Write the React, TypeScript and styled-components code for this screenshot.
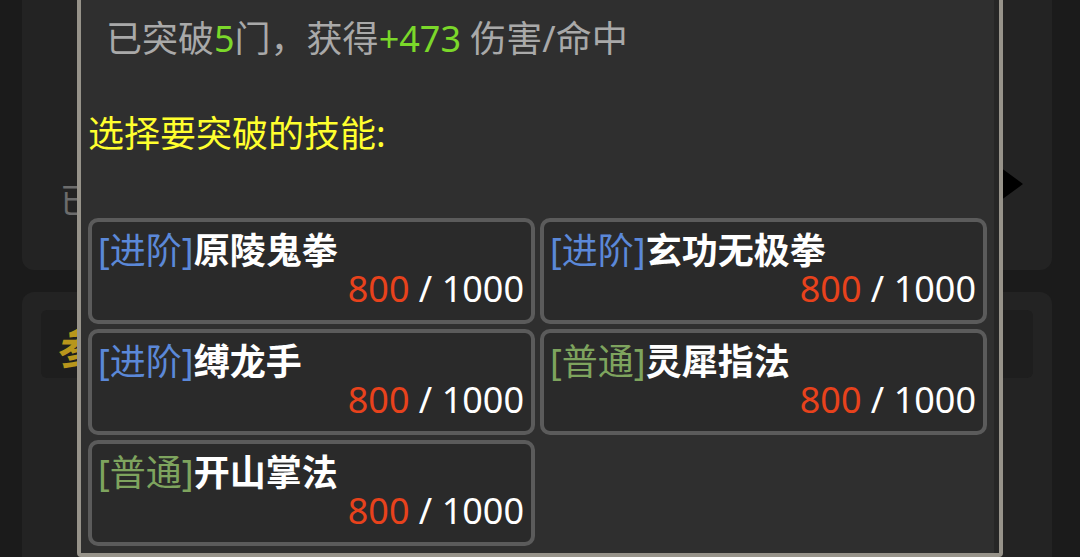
import styled, { createGlobalStyle } from "styled-components";

const GlobalStyle = createGlobalStyle`
  html, body {
    margin: 0;
    padding: 0;
    background: #1b1b1b;
    font-family: "Noto Sans", "Noto Sans CJK SC", sans-serif;
  }
`;

const Page = styled.div`
  height: 557px;
  overflow: hidden;
  padding: 0 28px 0 22px;
  display: flex;
  flex-direction: column;
  gap: 22px;
  box-sizing: border-box;
`;

const BgCard = styled.div<{ $grow?: boolean }>`
  background: #232323;
  border-radius: ${(p) => (p.$grow ? "12px 12px 0 0" : "0 0 12px 12px")};
  height: ${(p) => (p.$grow ? "auto" : "270px")};
  flex: ${(p) => (p.$grow ? "1" : "none")};
  display: flex;
  flex-direction: column;
  justify-content: ${(p) => (p.$grow ? "flex-start" : "flex-end")};
  padding: ${(p) => (p.$grow ? "18px 19px" : "0 29px 52px 38px")};
  box-sizing: border-box;
`;

const BgRow = styled.div`
  display: flex;
  align-items: center;
  justify-content: space-between;
  height: 40px;
`;

const BgText = styled.span`
  color: #6c6c6c;
  font-size: 34px;
`;

const Chevron = styled.svg`
  margin-bottom: 28px;
`;

const BgBox = styled.div`
  height: 68px;
  background: #1e1e1e;
  border-radius: 6px;
  display: flex;
  align-items: center;
  padding-left: 14px;
`;

const GoldGlyph = styled.span`
  color: #b8961c;
  font-size: 46px;
  font-weight: 700;
  font-style: italic;
`;

const Overlay = styled.div`
  position: fixed;
  inset: 0;
  display: flex;
  justify-content: center;
  align-items: flex-end;
  overflow: hidden;
`;

const Modal = styled.div`
  width: 926px;
  box-sizing: border-box;
  background: #2f2f2f;
  border: 4px solid #97938a;
  border-radius: 4px;
  box-shadow: inset -5px 0 0 #262626;
  padding: 15px 12px 7px 7px;
  display: flex;
  flex-direction: column;
`;

const Summary = styled.div`
  color: #a9a9a9;
  font-size: 36px;
  line-height: 50px;
  padding-left: 18px;
  white-space: nowrap;
`;

const Green = styled.span`
  color: #7bd82a;
`;

const Prompt = styled.div`
  color: #ffff2e;
  font-size: 36px;
  line-height: 50px;
  margin-top: 45px;
`;

const SkillGrid = styled.div`
  margin-top: 59px;
  display: grid;
  grid-template-columns: 1fr 1fr;
  gap: 5px;
`;

const SkillCard = styled.div`
  height: 106px;
  box-sizing: border-box;
  background: #2a2a2a;
  border: 4px solid #5b5b5b;
  border-radius: 10px;
  padding: 7px 7px 15px 6px;
  display: flex;
  flex-direction: column;
`;

const SkillName = styled.div`
  font-size: 36px;
  line-height: 38px;
  white-space: nowrap;
  color: #ffffff;
  font-weight: 700;
  font-family: "Noto Sans CJK SC", sans-serif;
`;

const Tier = styled.span<{ $color: string }>`
  color: ${(p) => p.$color};
  font-weight: 400;
  font-family: "Noto Sans", "Noto Sans CJK SC", sans-serif;
`;

const Progress = styled.div`
  font-size: 36px;
  line-height: 38px;
  text-align: right;
  color: #ffffff;
`;

const Current = styled.span`
  color: #e8421c;
`;

const tiers = {
  advanced: { label: "[进阶]", color: "#5b88d8" },
  normal: { label: "[普通]", color: "#7ea45e" },
};

type Skill = { name: string; tier: keyof typeof tiers; cur: number; max: number };

const skills: Skill[] = [
  { name: "原陵鬼拳", tier: "advanced", cur: 800, max: 1000 },
  { name: "玄功无极拳", tier: "advanced", cur: 800, max: 1000 },
  { name: "缚龙手", tier: "advanced", cur: 800, max: 1000 },
  { name: "灵犀指法", tier: "normal", cur: 800, max: 1000 },
  { name: "开山掌法", tier: "normal", cur: 800, max: 1000 },
];

const App = () => {
  return (
    <>
      <GlobalStyle />
      <Page>
        <BgCard>
          <BgRow>
            <BgText>已突破</BgText>
            <Chevron width="30" height="44" viewBox="0 0 30 44">
              <polygon points="0,0 30,22 0,44 6,22" fill="#000" />
            </Chevron>
          </BgRow>
        </BgCard>
        <BgCard $grow>
          <BgBox>
            <GoldGlyph>参</GoldGlyph>
          </BgBox>
        </BgCard>
      </Page>
      <Overlay>
        <Modal>
          <Summary>
            已突破<Green>5</Green>门，获得<Green>+473</Green> 伤害/命中
          </Summary>
          <Prompt>选择要突破的技能:</Prompt>
          <SkillGrid>
            {skills.map((s) => (
              <SkillCard key={s.name}>
                <SkillName>
                  <Tier $color={tiers[s.tier].color}>{tiers[s.tier].label}</Tier>
                  {s.name}
                </SkillName>
                <Progress>
                  <Current>{s.cur}</Current> / {s.max}
                </Progress>
              </SkillCard>
            ))}
          </SkillGrid>
        </Modal>
      </Overlay>
    </>
  );
};

export default App;
